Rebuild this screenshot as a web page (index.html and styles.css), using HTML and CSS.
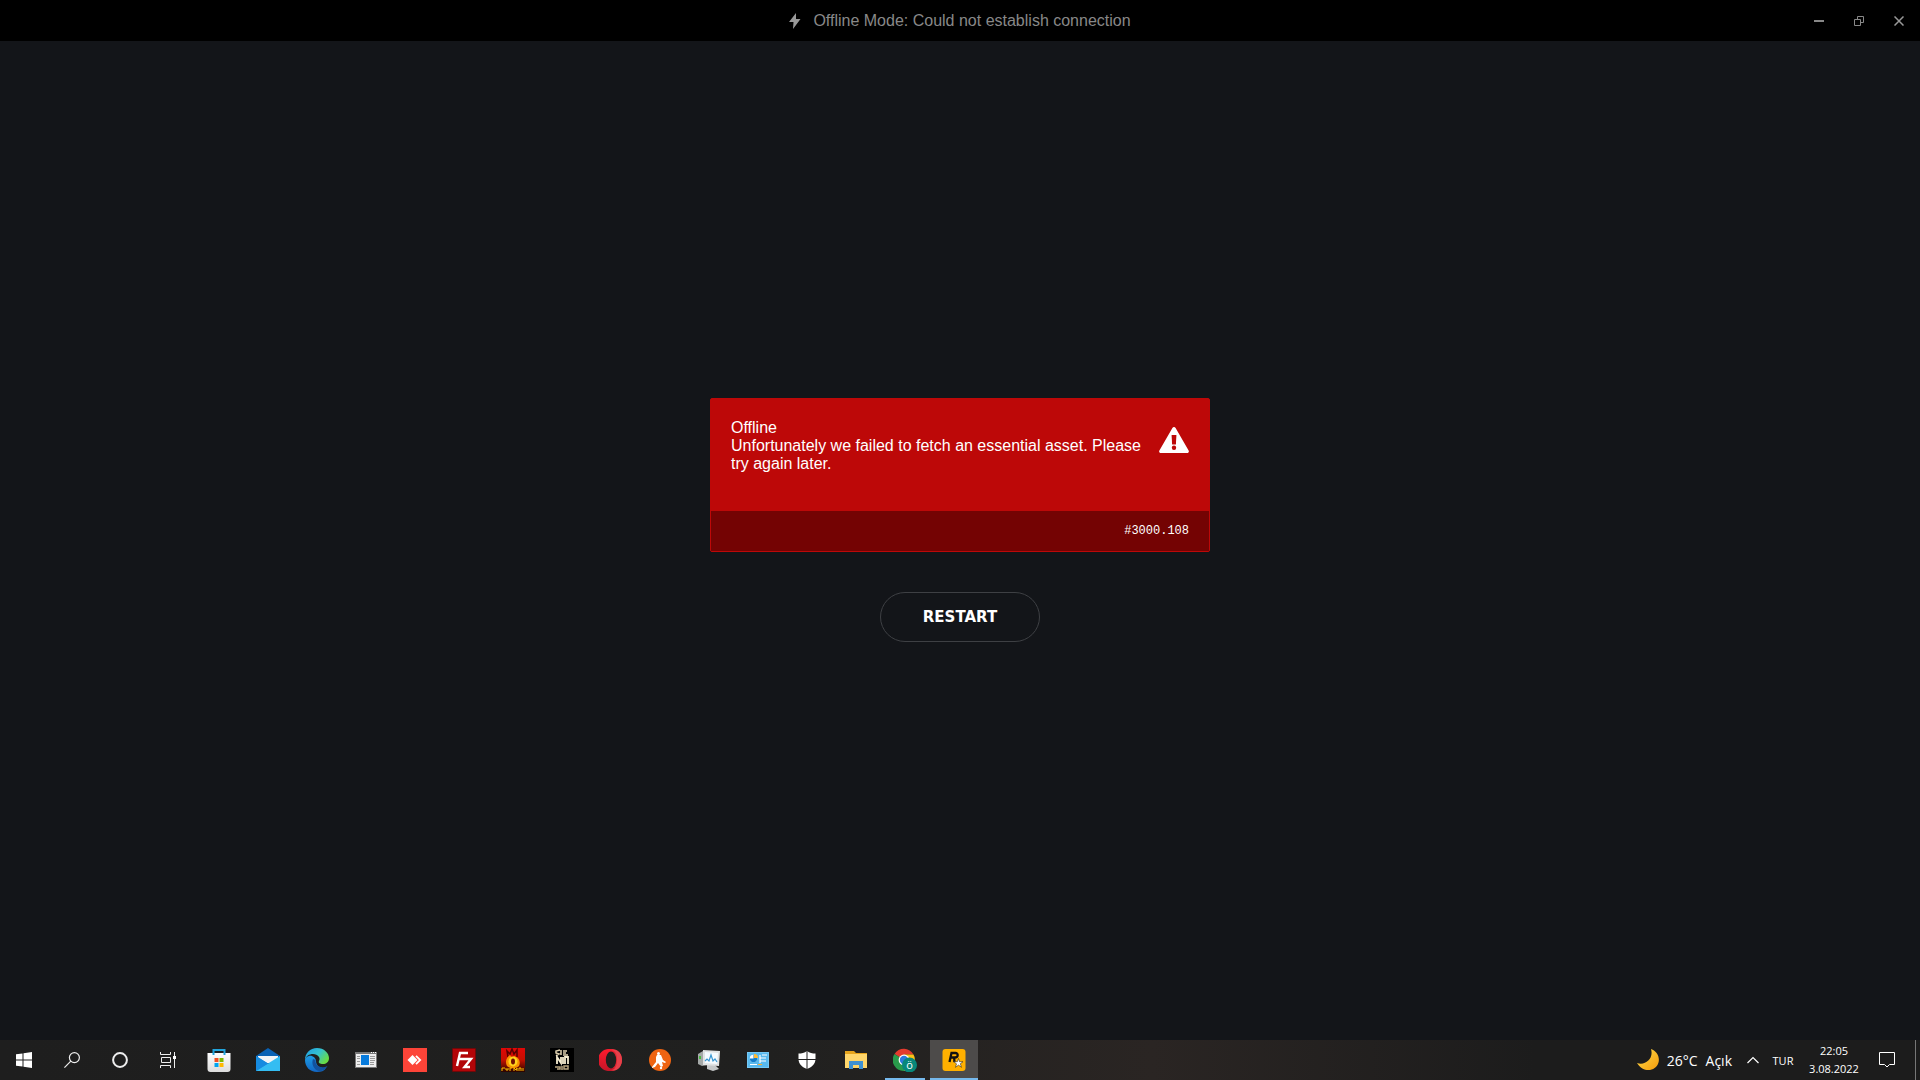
FILE: index.html
```html
<!DOCTYPE html>
<html lang="en">

<head>
    <meta charset="UTF-8">
    <meta name="viewport" content="width=device-width, initial-scale=1.0">
    <title>Offline Mode</title>
    <link rel="stylesheet" href="styles.css">
</head>

<body>

    <header class="titlebar">
        <div class="status">
            <svg width="12" height="16" viewBox="0 0 12 16"><path d="M7 0 0 9h4.500L4 16l7.500-10H7z" fill="#999"/></svg>
            <span>Offline Mode: Could not establish connection</span>
        </div>
        <div class="window-buttons">
            <button type="button" aria-label="Minimize">
                <svg width="10" height="10" viewBox="0 0 10 10"><path d="M0 4h10v2H0z" fill="#888"/></svg>
            </button>
            <button type="button" aria-label="Restore">
                <svg width="10" height="10" viewBox="0 0 10 10"><path d="M.5 3.500h6v6h-6zM3.500 3.500v-3h6v6h-3" fill="none" stroke="#888"/></svg>
            </button>
            <button type="button" aria-label="Close">
                <svg width="10" height="10" viewBox="0 0 10 10"><path d="M.5.5l9 9M9.500.5l-9 9" stroke="#999" stroke-width="1.500"/></svg>
            </button>
        </div>
    </header>

    <main class="content">
        <section class="alert">
            <div class="alert-body">
                <div class="alert-text">
                    <div>Offline</div>
                    <div>Unfortunately we failed to fetch an essential asset. Please try again later.</div>
                </div>
                <svg class="alert-icon" width="30" height="26" viewBox="0 0 30 26">
                    <path d="M13.400 1c.7-1.300 2.500-1.300 3.200 0l13 22.500c.7 1.300 0 2.500-1.400 2.500H1.800C.4 26-.3 24.800.4 23.500z" fill="#fff"/>
                    <path d="M12.600 8h4.800l-.5 9.500h-3.800z" fill="#bd0808"/>
                    <circle cx="15" cy="20.800" r="2.200" fill="#bd0808"/>
                </svg>
            </div>
            <div class="alert-footer">#3000.108</div>
        </section>
        <button type="button" class="restart">RESTART</button>
    </main>

    <footer class="taskbar">
        <div class="system">
            <button type="button" aria-label="Start">
                <svg width="16" height="16" viewBox="0 0 16 16"><path d="M0 2.300 6.500 1.400v6.100H0zM7.500 1.200 16 0v7.500H7.500zM0 8.500h6.500v6.100L0 13.700zM7.500 8.500H16V16l-8.500-1.200z" fill="#fff"/></svg>
            </button>
            <button type="button" aria-label="Search">
                <svg width="16" height="16" viewBox="0 0 16 16"><g fill="none" stroke="#eee" stroke-width="1.200"><circle cx="10.400" cy="5.600" r="5"/><path d="M6.800 9.200.4 15.600"/></g></svg>
            </button>
            <button type="button" aria-label="Cortana">
                <svg width="16" height="16" viewBox="0 0 16 16"><circle cx="8" cy="8" r="6.900" fill="none" stroke="#eee" stroke-width="2"/></svg>
            </button>
            <button type="button" aria-label="Task View">
                <svg width="16" height="16" viewBox="0 0 16 16"><path d="M.5 0v2.500h10V0M.5 16v-2.500h10V16M1.500 5.500h9v5h-9zM14.500 0v16" fill="none" stroke="#eee"/><path d="M13 4h3v3h-3z" fill="#fff"/></svg>
            </button>
        </div>

        <div class="apps">
            <button type="button" aria-label="Store">
                <svg width="24" height="24" viewBox="0 0 24 24">
                    <defs><linearGradient id="bag" x2="0" y2="1"><stop stop-color="#fff"/><stop offset="1" stop-color="#dcdcdc"/></linearGradient></defs>
                    <path d="M.5 5h23v16a3 3 0 0 1-3 3h-17a3 3 0 0 1-3-3z" fill="url(#bag)"/>
                    <path d="M6.500 7V2h11v5" fill="none" stroke="#22a5dc" stroke-width="2"/>
                    <path d="M7.500 10h4v4h-4z" fill="#f25022"/><path d="M12.500 10h4v4h-4z" fill="#7fba00"/>
                    <path d="M7.500 15h4v4h-4z" fill="#00a4ef"/><path d="M12.500 15h4v4h-4z" fill="#ffb900"/>
                </svg>
            </button>
            <button type="button" aria-label="Mail">
                <svg width="24" height="24" viewBox="0 0 24 24">
                    <path d="M0 8 12 0l12 8v6H0z" fill="#0a62b4"/>
                    <path d="M2 8h20v7H2z" fill="#f2f4f6"/>
                    <path d="M0 8v15h24z" fill="#1c8ee0"/>
                    <path d="M24 8v15H0z" fill="#34bdf2"/>
                    <path d="M0 8l12 7.500L0 23z" fill="#168be0"/>
                </svg>
            </button>
            <button type="button" aria-label="Edge">
                <svg width="24" height="24" viewBox="0 0 24 24">
                    <defs>
                        <linearGradient id="edge-top" x1="0" y1="0" x2="1" y2=".6"><stop stop-color="#1c9de8"/><stop offset=".55" stop-color="#35c1cf"/><stop offset="1" stop-color="#68dc45"/></linearGradient>
                        <linearGradient id="edge-left" x2="0" y2="1"><stop stop-color="#1d9ce5"/><stop offset="1" stop-color="#1266c4"/></linearGradient>
                    </defs>
                    <path d="M0 12c0 7 5 12 12 12 4 0 7-1 9-4-5 1-10-2-10-7 0-3-4-6-7-5-2 .5-4 2-4 4z" fill="url(#edge-left)"/>
                    <path d="M8 11c-2 5 1 11 6 12 4 0 7-2 8.500-5-6 3-13 0-12-6z" fill="#12529e"/>
                    <path d="M0 12C0 5 5 0 12 0s12 5 12 10c0 4-3 6-6 6-3 0-5-1-4-3 2-3-1-7-6-7-4 0-7 2-8 6z" fill="url(#edge-top)"/>
                </svg>
            </button>
            <button type="button" aria-label="Reader">
                <svg width="22" height="16" viewBox="0 0 22 16">
                    <path d="M0 0h22v16H0z" fill="#777"/><path d="M1 2h20v13H1z" fill="#eee"/>
                    <path d="M2 4h3v1H2zM2 6h3v1H2zM2 9h3v1H2zM2 12h3v1H2zM15 4h5v1h-5zM15 6h5v1h-5zM15 8h5v1h-5zM15 10h4v1h-4zM15 12h4v1h-4z" fill="#999"/>
                    <path d="M6 3h8v10H6z" fill="#087bdc"/>
                    <path d="M16 0h1v1h-1zM18 0h1v1h-1zM20 0h1v1h-1z" fill="#fff"/>
                </svg>
            </button>
            <button type="button" aria-label="AnyDesk">
                <svg width="24" height="24" viewBox="0 0 24 24">
                    <path d="M0 0h24v24H0z" fill="#fd4438"/><path d="M4.500 12 9.500 7l5 5-5 5z" fill="#fff"/>
                    <path d="M13 7.800 17.200 12 13 16.200" fill="none" stroke="#fff" stroke-width="1.800"/>
                </svg>
            </button>
            <button type="button" aria-label="FileZilla">
                <svg width="24" height="24" viewBox="0 0 24 24">
                    <path d="M.5.5h23v23H.5z" fill="#b20508" stroke="#700" stroke-dasharray="1 1"/>
                    <path d="M5 18 8 5h8M7 11h6M12 11h7l-6.500 8H18" fill="none" stroke="#fff" stroke-width="2.400"/>
                </svg>
            </button>
            <button type="button" aria-label="FurMark">
                <svg width="24" height="24" viewBox="0 0 24 24">
                    <defs><linearGradient id="fire" x2="0" y2="1"><stop stop-color="#e00707"/><stop offset=".5" stop-color="#c41000"/><stop offset="1" stop-color="#280500"/></linearGradient></defs>
                    <path d="M0 0h24v24H0z" fill="url(#fire)"/>
                    <path d="M7 9 6 3l3 3 2-5 2 5 3-4v7" fill="none" stroke="#500" stroke-width="1.500"/>
                    <path d="M9 7c-4 3-5 7-3 11 3 3 9 3 12 0 2-4 0-9-5-10l-2 2z" fill="#f89000"/>
                    <ellipse cx="12" cy="13.500" rx="4.500" ry="5" fill="#ffd21c"/>
                    <ellipse cx="12" cy="13.500" rx="2" ry="3" fill="#721000"/>
                    <path d="M1 23v-3h3M5 20v2h2v-2M9 23v-3h2M13 23v-3l2 2 1-2v3M18 23v-3h2v3M22 20v3" fill="none" stroke="#ffc000"/>
                </svg>
            </button>
            <button type="button" aria-label="Game">
                <svg width="24" height="24" viewBox="0 0 24 24">
                    <path d="M0 0h24v24H0z" fill="#000"/>
                    <path d="M10 2 6 3v2l3 1-3 2M11 2v5M13 3h4M13 5h3M13 7h5" fill="none" stroke="#ded0ae" stroke-width="1.500"/>
                    <path d="M7 16V9l4 6V9M13 9v7M15 16V9h3v7" fill="none" stroke="#f5ebcf" stroke-width="1.800"/>
                    <path d="M5 19h5v2H7M12 18v4M14 18h4v3h-4z" fill="none" stroke="#b9a580" stroke-width="1.500"/>
                </svg>
            </button>
            <button type="button" aria-label="Opera">
                <svg width="24" height="24" viewBox="0 0 24 24">
                    <defs><linearGradient id="opera" x2="0" y2="1"><stop stop-color="#ff1b2d"/><stop offset="1" stop-color="#c41528"/></linearGradient></defs>
                    <circle cx="12" cy="12" r="11" fill="#df2531"/>
                    <path d="M10 1a11 11 0 1 0 0 22c3 0 6-1 8-3-6 1-11-2-11-8s5-9 11-8C16 2 13 1 10 1z" fill="url(#opera)"/>
                    <path d="M12 2c7-2 11 4 11 10s-4 12-11 10c4 0 6-4 6-10S16 2 12 2z" fill="#e8404a"/>
                    <ellipse cx="12" cy="12" rx="5.200" ry="8.500" fill="#20201f"/>
                </svg>
            </button>
            <button type="button" aria-label="Football">
                <svg width="24" height="24" viewBox="0 0 24 24">
                    <circle cx="12" cy="12" r="11" fill="#ef6412"/>
                    <circle cx="10.500" cy="5.500" r="1.500" fill="#fff"/>
                    <path d="M9 7h4l2 5 3 2-1 1-3-1 1 4-2 1-3-4-3 4-3 1v-1l4-5V9z" fill="#fff"/>
                    <circle cx="13" cy="20" r="1.200" fill="#fff"/>
                </svg>
            </button>
            <button type="button" aria-label="Resource Monitor">
                <svg width="24" height="24" viewBox="0 0 24 24">
                    <path d="M1 6l5-3 4 1v13l-5 1-4-2z" fill="#a5a9a8"/><path d="M2 8h2v3H2z" fill="#48b940"/>
                    <path d="M10 17h8l4 4-6 2-6-2z" fill="#c5c7c8"/>
                    <path d="M6 2l17 1-1 15-16-1z" fill="#e0e2e3"/><path d="M8 4l13 1-1 11-12-1z" fill="#f5fbff"/>
                    <path d="M8 13l2-2 2 2 2-6 2 6 2-2 2 3" fill="none" stroke="#3896d1" stroke-width="1.200"/>
                </svg>
            </button>
            <button type="button" aria-label="Control Panel">
                <svg width="22" height="16" viewBox="0 0 22 16">
                    <path d="M0 0h22v16H0z" fill="#74c8f5"/><path d="M1 1h20v14H1z" fill="#58b9ee"/>
                    <circle cx="6.500" cy="6.500" r="3.700" fill="#fff"/><path d="M6.500 6.500V2.800a3.700 3.700 0 1 1-3.700 3.700z" fill="#137dcb"/><path d="M7 6V2a4 4 0 0 1 4 4z" fill="#ffba32"/>
                    <path d="M13 6h6M13 9h6M15 3h5M13 3v8" stroke="#fff" stroke-width="1.200"/>
                    <path d="M3 12.500h7" stroke="#fff"/><path d="M11 12.500h4" stroke="#ffaf28"/>
                </svg>
            </button>
            <button type="button" aria-label="Windows Security">
                <svg width="18" height="18" viewBox="0 0 18 18">
                    <path d="M9 0c2.500 2 5.500 2.500 8.500 2.500V8c0 5-4 8.500-8.500 10C4.500 16.500.5 13 .5 8V2.500C3.500 2.500 6.500 2 9 0z" fill="#fff"/>
                    <path d="M9 0v18M0 8.500h18" stroke="#222"/>
                </svg>
            </button>
            <button type="button" aria-label="File Explorer">
                <svg width="22" height="18" viewBox="0 0 22 18">
                    <path d="M0 0h9l2 2h11v15H0z" fill="#e7a51d"/><path d="M0 3h22v14H0z" fill="#ffd66b"/>
                    <path d="M4 10h14v8h-4v-4H8v4H4z" fill="#3f91d2"/><path d="M8 14h6v3H8z" fill="#ffd66b"/>
                </svg>
            </button>
            <button type="button" class="running" aria-label="Chrome">
                <svg width="24" height="24" viewBox="0 0 24 24">
                    <path d="M11 12 1.500 6a11 11 0 0 1 19 .5H11z" fill="#e33b2e"/>
                    <path d="M11 12 1.500 6A11 11 0 0 0 11 23z" fill="#299b4b"/>
                    <path d="M11 12V6.500h9.500A11 11 0 0 1 11 23z" fill="#fbc116"/>
                    <circle cx="11" cy="12" r="5.400" fill="#fff"/><circle cx="11" cy="12" r="4.200" fill="#2d79df"/>
                    <circle cx="16.500" cy="17" r="7.500" fill="#08877a"/>
                    <text class="profile" x="16.500" y="21">ö</text>
                </svg>
            </button>
            <button type="button" class="running active" aria-label="Rockstar Games Launcher">
                <svg width="24" height="24" viewBox="0 0 24 24">
                    <rect x=".5" y="1" width="23" height="22" rx="3" fill="#ffb000"/>
                    <path d="M7.500 14 9.500 5h4c3 0 3 4.500-.5 4.500H9M11 9.500c2 0 1 2.500 1.500 4.500" fill="none" stroke="#111" stroke-width="2.300"/>
                    <path d="M16.500 10.500l1 3.200h3.500l-2.700 2 1.200 3.600-3-2.200-3 2.200 1-3.500-2.800-2.100h3.700z" fill="#fff" stroke="#111" stroke-width=".5"/>
                </svg>
            </button>
        </div>

        <div class="tray">
            <button type="button" class="weather">
                <svg width="22" height="22" viewBox="0 0 22 22">
                    <defs><linearGradient id="moon" x2="1" y2="1"><stop stop-color="#ffdd4b"/><stop offset="1" stop-color="#f49b0b"/></linearGradient></defs>
                    <path d="M14 0c6 2 9 8 7.500 13.500C19 22 7 25 0 14c8 3 17-4 14-14z" fill="url(#moon)"/>
                </svg>
                <span>26°C</span>
                <span>Açık</span>
            </button>
            <button type="button" class="chevron" aria-label="Show hidden icons">
                <svg width="12" height="8" viewBox="0 0 12 8"><path d="M.5 7 6 1.500 11.500 7" fill="none" stroke="#fff" stroke-width="1.200"/></svg>
            </button>
            <button type="button" class="language">TUR</button>
            <button type="button" class="clock">
                <span>22:05</span>
                <span>3.08.2022</span>
            </button>
            <button type="button" class="notifications" aria-label="Notifications">
                <svg width="16" height="16" viewBox="0 0 16 16"><path d="M.5.5h15v12h-5L8 15l-2.500-2.500h-5z" fill="none" stroke="#fff"/></svg>
            </button>
            <button type="button" class="show-desktop" aria-label="Show desktop"></button>
        </div>
    </footer>

</body>

</html>
```

FILE: styles.css
```css
* {
    box-sizing: border-box;
}

body {
    display: flex;
    flex-direction: column;
    min-height: 100vh;
    margin: 0;
    background: #131519;
    color: #fff;
    font-family: "Liberation Sans", Arial, sans-serif;
    font-size: 16px;
}

button {
    padding: 0;
    border: 0;
    background: none;
    color: inherit;
    font-family: inherit;
}

svg {
    display: block;
    flex: none;
}

/* Title bar */
.titlebar {
    display: grid;
    grid-template-columns: 1fr auto 1fr;
    align-items: center;
    height: 41px;
    background: #000;
    color: #888;
}

.status {
    display: flex;
    grid-column: 2;
    align-items: center;
    gap: 12px;
}

.window-buttons {
    display: flex;
    justify-content: flex-end;
    padding-right: 1px;
}

.window-buttons button {
    display: grid;
    place-items: center;
    width: 40px;
    height: 40px;
}

/* Error message */
.content {
    display: flex;
    flex: 1;
    flex-direction: column;
    align-items: center;
    justify-content: center;
    gap: 40px;
    padding-bottom: 41px;
}

.alert {
    width: 500px;
    max-width: 100%;
    border: 1px solid #bd0808;
    border-radius: 2px;
    background: #bd0808;
}

.alert-body {
    display: flex;
    justify-content: space-between;
    gap: 16px;
    min-height: 112px;
    padding: 20px;
    line-height: 18px;
}

.alert-icon {
    margin-top: 8px;
}

.alert-footer {
    padding: 0 20px;
    background: #740303;
    font-family: "Liberation Mono", monospace;
    font-size: 12px;
    line-height: 40px;
    text-align: right;
}

.restart {
    width: 160px;
    height: 50px;
    border: 1px solid #3e4044;
    border-radius: 25px;
    font-family: "Arial Black", "DejaVu Sans", sans-serif;
    font-size: 15px;
    font-weight: 900;
}

/* Taskbar */
.taskbar {
    display: flex;
    height: 40px;
    background: linear-gradient(90deg, #1e1e1e, #20201f 40%, #2a2523 60%, #1c1c1c 80%);
    font-family: "Open Sans", "Noto Sans", sans-serif;
}

.system,
.apps,
.tray {
    display: flex;
}

.system button,
.apps button {
    display: grid;
    place-items: center;
    width: 48px;
}

.apps {
    gap: 1px;
    margin-left: 3px;
}

.apps .running {
    background: linear-gradient(#76b9ed, #76b9ed) center bottom / 40px 2px no-repeat;
}

.apps .active {
    background-color: #4d4b4a;
    background-size: 48px 2px;
}

.profile {
    fill: #fff;
    font-size: 11px;
    text-anchor: middle;
}

.tray {
    margin-left: auto;
}

.tray button {
    display: flex;
    align-items: center;
    justify-content: center;
    font-size: 11px;
}

.tray .weather {
    gap: 8px;
    padding-right: 12px;
    font-size: 14px;
}

.tray .chevron {
    width: 18px;
}

.tray .language {
    width: 42px;
}

.tray .clock {
    flex-direction: column;
    width: 60px;
    line-height: 18px;
}

.tray .notifications {
    width: 46px;
}

.tray .show-desktop {
    width: 5px;
    margin-left: 5px;
    border-left: 1px solid #777;
}
```
